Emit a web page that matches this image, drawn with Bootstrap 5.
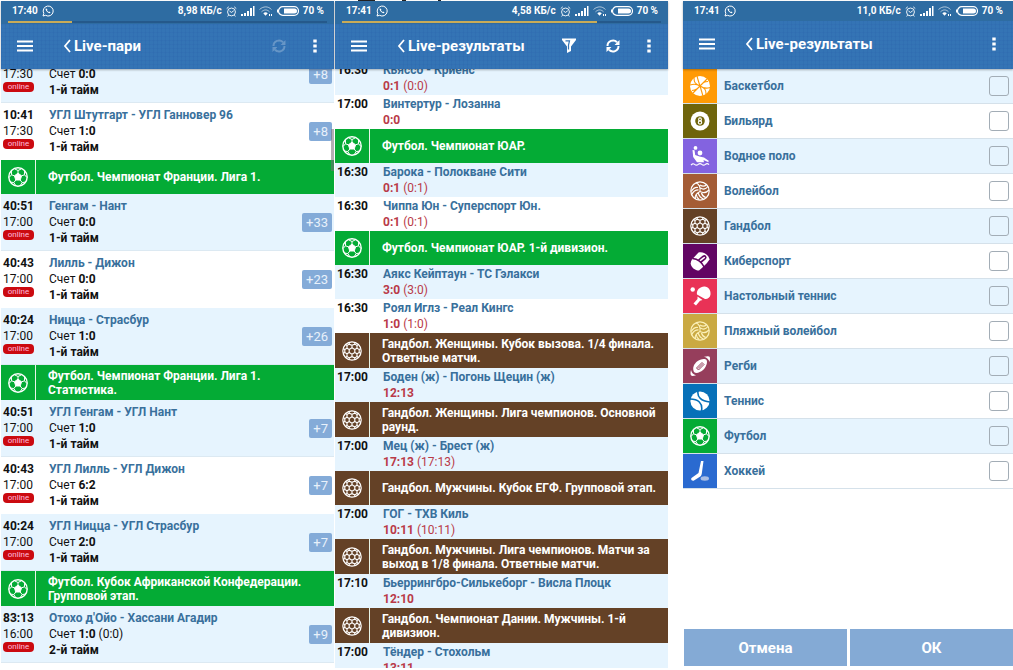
<!DOCTYPE html>
<html lang="ru">
<head>
<meta charset="utf-8">
<meta name="viewport" content="width=device-width, initial-scale=1">
<title>Live-пари</title>
<link href="https://cdn.jsdelivr.net/npm/bootstrap@5.3.0/dist/css/bootstrap.min.css" rel="stylesheet">
<style>
  :root { --row: #e6f4fe; --ink: #39709c; --bar: #3474b5; --soft: #84abd8; }
  body { font-family: Roboto, "Noto Sans", sans-serif; font-size: 12px; line-height: 16px; color: #111; background: #fff; }
  .screens { height: 100vh; padding: 0 0 2px 1px; }
  .page-scrap { height: 1px; padding-left: 356px; }
  .phone { flex: 333 1 0; min-width: 0; }
  .phone-last { flex-grow: 330; margin-left: 14px; }
  .app-head { height: 68px; color: #fff; background-color: var(--bar);
    background-image: repeating-linear-gradient(90deg, rgba(20,60,150,.08) 0 1px, transparent 1px 4px), repeating-linear-gradient(0deg, rgba(20,60,150,.06) 0 1px, transparent 1px 4px);
    box-shadow: 0 1px 2px rgba(0,0,0,.3); z-index: 1; }
  .status { height: 20px; padding: 0 10px 0 11px; font-size: 10px; font-weight: 700; background: #2e6ca2; }
  .load-track { height: 3px; padding: 0 7px 1px; background: #2e6ca2; }
  .load-track .progress { height: 2px; border-radius: 0; background: #25598b; }
  .load-track .progress-bar { background: #c9ab58; }
  .tools { padding: 0 5px 2px 16px; }
  .tools button { border: 0; padding: 0; background: none; color: inherit; line-height: 0; }
  .tools .tool { width: 44px; height: 32px; }
  .tools .more { width: 28px; height: 32px; }
  .tools .back { margin-left: 30px; }
  .title { font-size: 15px; line-height: 20px; font-weight: 700; margin: 0 0 0 3px; }
  .feed { min-height: 0; overflow: hidden; padding-bottom: 24px; }
  .league { min-height: 34px; color: #fff; font-weight: 700; line-height: 14px; }
  .league.two { min-height: 35px; }
  .league h2 { font: inherit; margin: 0; padding: 0 4px 0 12px; }
  .league .ico { flex: 0 0 35px; border-right: 1px solid #e8f5e8; }
  .green { background: #04ab35; }
  .brown { background: #644126; }
  .game { height: 57px; padding: 4px 2px 0 2px; }
  .game.even, .result.even, .sport:nth-child(odd) { background: var(--row); }
  .game.even { box-shadow: inset 0 -1px #dce9f2; }
  .when { width: 46px; }
  .name { color: var(--ink); font-weight: 700; }
  .live { width: 31px; height: 10px; border-radius: 4px; background: #cb0a10; color: #fbd; font-size: 8px; line-height: 10px; text-align: center; }
  .more-bets { height: 19px; padding: 0 4px; border: 0; border-radius: 2px; background: var(--soft); color: #e8f1fb; font-size: 13px; line-height: 19px; margin-top: -4px; }
  .result { height: 34px; padding: 1px 2px 0; }
  .score { color: #b93a48; }
  b { font-weight: 700; }
  .thumb { top: 60px; right: 0; width: 3px; height: 42px; background: rgba(120,110,120,.55); }
  .sport { height: 35px; border-bottom: 1px solid #d5e1ea; color: var(--ink); font-weight: 700; padding-right: 4px; }
  .sport .ico { width: 34px; height: 34px; }
  .sport .label-text { padding-left: 7px; }
  .sport .form-check-input { width: 20px; height: 20px; margin: 0; border: 1px solid #a3adb6; border-radius: 3px; background-color: transparent; }
  .actions { gap: 3px; padding: 0 0 2px 1px; }
  .actions button { height: 37px; border: 0; background: #84aad5; color: #fff; font-size: 15px; font-weight: 700; }
</style>
</head>
<body>
<svg class="d-none" aria-hidden="true">
  <symbol id="menu" viewBox="0 0 16 12"><path d="M0 1.500h16M0 6h16M0 10.500h16" stroke="currentColor" stroke-width="1.800"/></symbol>
  <symbol id="back" viewBox="0 0 8 14"><path d="M7 1 2 7l5 6" fill="none" stroke="currentColor" stroke-width="1.800"/></symbol>
  <symbol id="dots" viewBox="0 0 4 14"><path d="M.3.500h3.400v3H.3zM.3 5.500h3.400v3H.3zM.3 10.500h3.400v3H.3z" fill="currentColor"/></symbol>
  <symbol id="reload" viewBox="0 0 16 16"><path d="M2.500 8A5.500 5.500 0 0 1 12 4.200M13.500 8A5.500 5.500 0 0 1 4 11.800" fill="none" stroke="currentColor" stroke-width="2"/><path d="M14.500 2v5H9.500zM1.500 14V9h5z" fill="currentColor"/></symbol>
  <symbol id="filter" viewBox="0 0 14 15"><path d="M0 .500h14v1.500L9 8.500V13l-4 2V8.500L0 2z" fill="currentColor"/><path d="M3.500 2.800h4L6.500 7v4.500" fill="none" stroke="#3474b5" stroke-width="1.200"/></symbol>
  <symbol id="wa" viewBox="0 0 12 12"><path d="M1 11l.8-2.600A5 5 0 1 1 3.600 10.300z" fill="none" stroke="currentColor"/><path d="M4 3.300c-.8.900-.3 2.200 1 3.500s2.700 1.900 3.600 1l-1.300-1.200-.8.500L5 5.500l.4-.9z" fill="currentColor"/></symbol>
  <symbol id="alarm" viewBox="0 0 12 12"><circle cx="6" cy="6.500" r="4.300" fill="none" stroke="currentColor"/><path d="M.8 2.800 3 .9M11.200 2.800 9 .9M3.800 5.500 6 7l2.500-1.800M2.800 10l-1 1.400M9.200 10l1 1.400" fill="none" stroke="currentColor"/></symbol>
  <symbol id="signal" viewBox="0 0 14 12"><path d="M0 9h2v2H0zM3 8h2v3H3zM6 6h2v5H6zM9 3h2v8H9zM12 1h1.500v10H12z" fill="currentColor"/></symbol>
  <symbol id="wifi" viewBox="0 0 14 12"><path d="M.5 4.500c4-3.500 8.500-3.500 12 0M2.500 6.800c2.800-2.500 5.500-2.500 8 0" fill="none" stroke="currentColor" opacity=".6"/><path d="M4.300 8.300c1.500-1.300 3-1.300 4.500 0L6.500 10.700zM10 9h1v2h-1zM12 9h1v2h-1z" fill="currentColor"/></symbol>
  <symbol id="batt" viewBox="0 0 22 10"><rect x="1.500" y=".7" width="20" height="8.600" rx="4.300" fill="none" stroke="currentColor" stroke-width="1.200"/><path d="M7 2.500h10.500a2.500 2.500 0 0 1 0 5H7zM0 3.500h1v3H0z" fill="currentColor"/></symbol>

  <symbol id="football" viewBox="0 0 20 20"><g stroke="currentColor"><circle cx="10" cy="10" r="9.200" fill="none" stroke-width="1.400"/><path d="M10 6.200 13.600 8.800 12.200 13H7.800L6.400 8.800z" fill="currentColor"/><path d="M10 6.200V3.500M13.600 8.800l2.900-1M12.200 13l2 2.600M7.800 13l-2 2.600M6.400 8.800l-2.900-1M10 3.500 13.500 1.800M10 3.500 6.500 1.800M16.500 7.800l2.500 2.700M16.500 7.800 16.600 4M14.200 15.600l3.500-.6M14.200 15.600 12 18.900M5.800 15.600l-3.500-.6M5.800 15.600 8 18.900M3.500 7.800 1 10.500M3.500 7.800 3.400 4" fill="none"/></g></symbol>
  <symbol id="handball" viewBox="0 0 20 20"><g fill="none" stroke="currentColor" stroke-width="1.200"><circle cx="10" cy="10" r="9.200"/><path d="M10 6.800 12.800 8.500v3L10 13.200 7.200 11.500v-3zM10 6.800V4.300M12.800 8.500 15 7.200M12.800 11.500l2.200 1.300M10 13.200v2.500M7.200 11.500 5 12.800M7.200 8.500 5 7.200M10 4.300l2.800-1.200L15 4.500v2.700l2.200 1.300v3L15 12.800v2.700l-2.200 1.400-2.800-1.200-2.800 1.200L5 15.500v-2.700l-2.200-1.300v-3L5 7.200V4.500l2.200-1.400zM12.800 3.100V1.200M7.200 3.100V1.200M17.200 8.500l1.700-.9M17.200 11.500l1.700.9M2.800 8.500l-1.700-.9M2.800 11.500l-1.700.9M12.800 16.900v1.900M7.200 16.900v1.900M15 4.500l1.500-.9M5 4.500l-1.500-.9M15 15.500l1.500.9M5 15.500l-1.500.9"/></g></symbol>
  <symbol id="basket" viewBox="0 0 20 20"><circle cx="10" cy="10" r="10" fill="currentColor"/><path d="M4 2c0 4 1 6 6 8s6 4 6 8M2 14.500c4-.5 6-1.500 8-4.500s4-4.500 8-4.500M3 17 17 3M7 0c1 4 2 7 3 10s2 7 3 10M0 9c4-1.500 7-1 10 1s7 2.500 10 1.500" fill="none" stroke="#ff9a05" stroke-width="1.100"/></symbol>
  <symbol id="billiard" viewBox="0 0 20 20"><circle cx="10" cy="10" r="9.500" fill="currentColor"/><circle cx="10" cy="10" r="4.800" fill="#6f640b"/><g fill="none" stroke="currentColor" stroke-width="1.100"><ellipse cx="10" cy="8.400" rx="1.400" ry="1.500"/><ellipse cx="10" cy="11.500" rx="1.700" ry="1.600"/></g></symbol>
  <symbol id="polo" viewBox="0 0 20 20"><circle cx="5.500" cy="1.900" r="1.900" fill="currentColor"/><circle cx="10" cy="7" r="2.400" fill="currentColor"/><path d="M2.500 4 4.500 4.200 5.200 9l4.300 1.500 4.500 1L19 15l-1 1-4.500-2 .5 2.200H7L3.200 11z" fill="currentColor"/><path d="M1 19.200q1.800-2.400 3.600-.8t3.600 0 3.600 0 3.600 0 3.600.3" fill="none" stroke="currentColor" stroke-width="1.200"/></symbol>
  <symbol id="volley" viewBox="0 0 20 20"><g fill="none" stroke="currentColor" stroke-width="1.200"><circle cx="10" cy="10" r="9.200"/><path d="M10 10.500C10.500 6.500 9 3 6 1.700M10 10.500C6 12.500 4.500 15 5.500 18M10 10.500c3.500 1.800 6.500 1.200 9-1.500M8 6.500C5.500 6 3 7.500 1.200 10.500M8.500 8.800C5.500 8.800 3 10.800 1.800 13.500M10.500 7C13 8.800 16 8.200 17.800 5.500M10 4c2.500 1.800 4.800 1.500 6.500-.5M8.200 12c.8 3 2.800 5 5.300 6M11.500 12c.6 2.300 2 3.800 4.300 4.500M6.300 13.800c.2 2 1.200 3.700 3 5"/></g></symbol>
  <symbol id="cyber" viewBox="0 0 22 20"><path d="M3 8.500 9.500 1.500C14 0 20 4 20.500 8.500L18 12l-4 4-4 3.500C5 19.500-1 14 3 8.500z" fill="currentColor"/><path d="M3.500 7.500C9 8 13 11.500 15.500 16.500M9 9.500l5-4c2-1.500 4 .5 2 2.500l-4 3" fill="none" stroke="#620563" stroke-width="1.600"/></symbol>
  <symbol id="pingpong" viewBox="0 0 20 20"><circle cx="2.200" cy="3.500" r="2.200" fill="currentColor"/><path d="M6.500 8.500C5.500 4 10 .3 14 .5c4 .3 6.500 4 6 8-.4 3.200-3 4.800-5.500 4.500z" fill="currentColor"/><path d="M7 10.500 12 14l-2.500.8L5.500 19.500 3 17.500 7 13z" fill="currentColor"/></symbol>
  <symbol id="rugby" viewBox="0 0 20 20"><path d="M4 16C2 12 4 8 7 5.500S15 2 16.500 4 16 11.500 13 14 6 18 4 16z" fill="currentColor"/><path d="M14 .8q4-1 5.300-.2T19.500 6q-1-4-5.500-5.200zM1 14q-1 4 0 5.300t5-.1q-4-1-5-5.200z" fill="currentColor"/><path d="M6.500 12 12 6.500l2 2L8.500 14zM8 12.500l4.500-4.500" fill="none" stroke="#963e5c" stroke-width="1"/></symbol>
  <symbol id="tennis" viewBox="0 0 20 20"><circle cx="10" cy="10" r="9.600" fill="currentColor"/><path d="M8 0c-1 6 3 10 12 11M0 8c8 0 13 4 11.500 12" fill="none" stroke="#0770b8" stroke-width="1.600"/></symbol>
  <symbol id="hockey" viewBox="0 0 20 20"><path d="M11 0h2.500l-1.700 12.500c-.3 2-1 2.700-2.300 3.500L4 19.500c-2 .8-3.500-1-2.500-2.500l7-5z" fill="currentColor"/><ellipse cx="14.800" cy="17.500" rx="4.200" ry="2.200" fill="#a8bde4"/></symbol>
</svg>

<main class="screens d-flex flex-column">
  <div class="page-scrap d-flex" aria-hidden="true"><svg width="90" height="1"><path d="M1 .5h17M45 .5h4M81 .5h3" stroke="#222"/></svg></div>
  <div class="d-flex flex-grow-1" style="min-height:0;gap:1px">

  <section class="phone d-flex flex-column position-relative">
    <header class="app-head d-flex flex-column flex-shrink-0 position-relative">
      <div class="status d-flex align-items-center">
        <span>17:40</span><svg class="ms-1" width="12" height="12"><use href="#wa"/></svg>
        <span class="ms-auto">8,98 КБ/с</span><svg class="ms-1" width="11" height="11"><use href="#alarm"/></svg><svg class="ms-1" width="14" height="12"><use href="#signal"/></svg><svg class="ms-1" width="14" height="12"><use href="#wifi"/></svg><svg class="ms-1 me-1" width="22" height="10"><use href="#batt"/></svg><span>70 %</span>
      </div>
      <div class="load-track"><div class="progress"><div class="progress-bar" style="width:20%"></div></div></div>
      <div class="tools d-flex align-items-center flex-grow-1">
        <button type="button" aria-label="Меню"><svg width="16" height="12"><use href="#menu"/></svg></button>
        <button type="button" class="back" aria-label="Назад"><svg width="8" height="14"><use href="#back"/></svg></button>
        <h1 class="title">Live-пари</h1>
        <button type="button" class="tool ms-auto opacity-25" aria-label="Обновить"><svg width="16" height="16"><use href="#reload"/></svg></button>
        <button type="button" class="more" aria-label="Ещё"><svg width="4" height="14"><use href="#dots"/></svg></button>
      </div>
    </header>
    <div class="position-relative flex-grow-1 d-flex flex-column" style="min-height:0">
    <div class="feed flex-grow-1" data-scroll="23">
      <article class="game even d-flex"><div class="when"><b>&nbsp;</b><div>17:30</div><div class="live">online</div></div><div><div class="name">&nbsp;</div><div>Счет <b>0:0</b></div><b>1-й тайм</b></div><button class="more-bets ms-auto align-self-center" type="button">+8</button></article>
      <article class="game d-flex"><div class="when"><b>10:41</b><div>17:30</div><div class="live">online</div></div><div><div class="name">УГЛ Штутгарт - УГЛ Ганновер 96</div><div>Счет <b>1:0</b></div><b>1-й тайм</b></div><button class="more-bets ms-auto align-self-center" type="button">+8</button></article>
      <header class="league green d-flex"><div class="ico d-flex align-items-center justify-content-center"><svg width="20" height="20"><use href="#football"/></svg></div><h2 class="align-self-center">Футбол. Чемпионат Франции. Лига 1.</h2></header>
      <article class="game even d-flex"><div class="when"><b>40:51</b><div>17:00</div><div class="live">online</div></div><div><div class="name">Генгам - Нант</div><div>Счет <b>0:0</b></div><b>1-й тайм</b></div><button class="more-bets ms-auto align-self-center" type="button">+33</button></article>
      <article class="game d-flex"><div class="when"><b>40:43</b><div>17:00</div><div class="live">online</div></div><div><div class="name">Лилль - Дижон</div><div>Счет <b>0:0</b></div><b>1-й тайм</b></div><button class="more-bets ms-auto align-self-center" type="button">+23</button></article>
      <article class="game even d-flex"><div class="when"><b>40:24</b><div>17:00</div><div class="live">online</div></div><div><div class="name">Ницца - Страсбур</div><div>Счет <b>1:0</b></div><b>1-й тайм</b></div><button class="more-bets ms-auto align-self-center" type="button">+26</button></article>
      <header class="league two green d-flex"><div class="ico d-flex align-items-center justify-content-center"><svg width="20" height="20"><use href="#football"/></svg></div><h2 class="align-self-center">Футбол. Чемпионат Франции. Лига 1.<br>Статистика.</h2></header>
      <article class="game even d-flex"><div class="when"><b>40:51</b><div>17:00</div><div class="live">online</div></div><div><div class="name">УГЛ Генгам - УГЛ Нант</div><div>Счет <b>1:0</b></div><b>1-й тайм</b></div><button class="more-bets ms-auto align-self-center" type="button">+7</button></article>
      <article class="game d-flex"><div class="when"><b>40:43</b><div>17:00</div><div class="live">online</div></div><div><div class="name">УГЛ Лилль - УГЛ Дижон</div><div>Счет <b>6:2</b></div><b>1-й тайм</b></div><button class="more-bets ms-auto align-self-center" type="button">+7</button></article>
      <article class="game even d-flex"><div class="when"><b>40:24</b><div>17:00</div><div class="live">online</div></div><div><div class="name">УГЛ Ницца - УГЛ Страсбур</div><div>Счет <b>2:0</b></div><b>1-й тайм</b></div><button class="more-bets ms-auto align-self-center" type="button">+7</button></article>
      <header class="league two green d-flex"><div class="ico d-flex align-items-center justify-content-center"><svg width="20" height="20"><use href="#football"/></svg></div><h2 class="align-self-center">Футбол. Кубок Африканской Конфедерации.<br>Групповой этап.</h2></header>
      <article class="game even d-flex"><div class="when"><b>83:13</b><div>16:00</div><div class="live">online</div></div><div><div class="name">Отохо д'Ойо - Хассани Агадир</div><div>Счет <b>1:0</b> (0:0)</div><b>2-й тайм</b></div><button class="more-bets ms-auto align-self-center" type="button">+9</button></article>
    </div>
    <div class="thumb position-absolute"></div>
    </div>
  </section>

  <section class="phone d-flex flex-column">
    <header class="app-head d-flex flex-column flex-shrink-0 position-relative">
      <div class="status d-flex align-items-center">
        <span>17:41</span><svg class="ms-1" width="12" height="12"><use href="#wa"/></svg>
        <span class="ms-auto">4,58 КБ/с</span><svg class="ms-1" width="11" height="11"><use href="#alarm"/></svg><svg class="ms-1" width="14" height="12"><use href="#signal"/></svg><svg class="ms-1" width="14" height="12"><use href="#wifi"/></svg><svg class="ms-1 me-1" width="22" height="10"><use href="#batt"/></svg><span>70 %</span>
      </div>
      <div class="load-track"><div class="progress"><div class="progress-bar" style="width:80%"></div></div></div>
      <div class="tools d-flex align-items-center flex-grow-1">
        <button type="button" aria-label="Меню"><svg width="16" height="12"><use href="#menu"/></svg></button>
        <button type="button" class="back" aria-label="Назад"><svg width="8" height="14"><use href="#back"/></svg></button>
        <h1 class="title">Live-результаты</h1>
        <button type="button" class="tool ms-auto" aria-label="Фильтр"><svg width="14" height="15"><use href="#filter"/></svg></button>
        <button type="button" class="tool" aria-label="Обновить"><svg width="16" height="16"><use href="#reload"/></svg></button>
        <button type="button" class="more" aria-label="Ещё"><svg width="4" height="14"><use href="#dots"/></svg></button>
      </div>
    </header>
    <div class="feed flex-grow-1" data-scroll="8">
      <article class="result even d-flex"><b class="when">16:30</b><div><div class="name">Кьяссо - Криенс</div><div class="score"><b>0:1</b> (0:0)</div></div></article>
      <article class="result d-flex"><b class="when">17:00</b><div><div class="name">Винтертур - Лозанна</div><div class="score"><b>0:0</b></div></div></article>
      <header class="league green d-flex"><div class="ico d-flex align-items-center justify-content-center"><svg width="20" height="20"><use href="#football"/></svg></div><h2 class="align-self-center">Футбол. Чемпионат ЮАР.</h2></header>
      <article class="result even d-flex"><b class="when">16:30</b><div><div class="name">Барока - Полокване Сити</div><div class="score"><b>0:1</b> (0:1)</div></div></article>
      <article class="result d-flex"><b class="when">16:30</b><div><div class="name">Чиппа Юн - Суперспорт Юн.</div><div class="score"><b>0:1</b> (0:1)</div></div></article>
      <header class="league green d-flex"><div class="ico d-flex align-items-center justify-content-center"><svg width="20" height="20"><use href="#football"/></svg></div><h2 class="align-self-center">Футбол. Чемпионат ЮАР. 1-й дивизион.</h2></header>
      <article class="result even d-flex"><b class="when">16:30</b><div><div class="name">Аякс Кейптаун - ТС Гэлакси</div><div class="score"><b>3:0</b> (3:0)</div></div></article>
      <article class="result d-flex"><b class="when">16:30</b><div><div class="name">Роял Иглз - Реал Кингс</div><div class="score"><b>1:0</b> (1:0)</div></div></article>
      <header class="league two brown d-flex"><div class="ico d-flex align-items-center justify-content-center"><svg width="20" height="20"><use href="#handball"/></svg></div><h2 class="align-self-center">Гандбол. Женщины. Кубок вызова. 1/4 финала. Ответные матчи.</h2></header>
      <article class="result even d-flex"><b class="when">17:00</b><div><div class="name">Боден (ж) - Погонь Щецин (ж)</div><div class="score"><b>12:13</b></div></div></article>
      <header class="league two brown d-flex"><div class="ico d-flex align-items-center justify-content-center"><svg width="20" height="20"><use href="#handball"/></svg></div><h2 class="align-self-center">Гандбол. Женщины. Лига чемпионов. Основной раунд.</h2></header>
      <article class="result even d-flex"><b class="when">17:00</b><div><div class="name">Мец (ж) - Брест (ж)</div><div class="score"><b>17:13</b> (17:13)</div></div></article>
      <header class="league brown d-flex"><div class="ico d-flex align-items-center justify-content-center"><svg width="20" height="20"><use href="#handball"/></svg></div><h2 class="align-self-center">Гандбол. Мужчины. Кубок ЕГФ. Групповой этап.</h2></header>
      <article class="result even d-flex"><b class="when">17:00</b><div><div class="name">ГОГ - ТХВ Киль</div><div class="score"><b>10:11</b> (10:11)</div></div></article>
      <header class="league two brown d-flex"><div class="ico d-flex align-items-center justify-content-center"><svg width="20" height="20"><use href="#handball"/></svg></div><h2 class="align-self-center">Гандбол. Мужчины. Лига чемпионов. Матчи за выход в 1/8 финала. Ответные матчи.</h2></header>
      <article class="result even d-flex"><b class="when">17:10</b><div><div class="name">Бьеррингбро-Силькеборг - Висла Плоцк</div><div class="score"><b>12:10</b></div></div></article>
      <header class="league two brown d-flex"><div class="ico d-flex align-items-center justify-content-center"><svg width="20" height="20"><use href="#handball"/></svg></div><h2 class="align-self-center">Гандбол. Чемпионат Дании. Мужчины. 1-й<br>дивизион.</h2></header>
      <article class="result even d-flex"><b class="when">17:00</b><div><div class="name">Тёндер - Стохольм</div><div class="score"><b>13:11</b></div></div></article>
    </div>
  </section>

  <section class="phone phone-last d-flex flex-column">
    <header class="app-head d-flex flex-column flex-shrink-0 position-relative">
      <div class="status d-flex align-items-center">
        <span>17:41</span><svg class="ms-1" width="12" height="12"><use href="#wa"/></svg>
        <span class="ms-auto">11,0 КБ/с</span><svg class="ms-1" width="11" height="11"><use href="#alarm"/></svg><svg class="ms-1" width="14" height="12"><use href="#signal"/></svg><svg class="ms-1" width="14" height="12"><use href="#wifi"/></svg><svg class="ms-1 me-1" width="22" height="10"><use href="#batt"/></svg><span>70 %</span>
      </div>
      <div class="tools d-flex align-items-center flex-grow-1">
        <button type="button" aria-label="Меню"><svg width="16" height="12"><use href="#menu"/></svg></button>
        <button type="button" class="back" aria-label="Назад"><svg width="8" height="14"><use href="#back"/></svg></button>
        <h1 class="title">Live-результаты</h1>
        <button type="button" class="more ms-auto" aria-label="Ещё"><svg width="4" height="14"><use href="#dots"/></svg></button>
      </div>
    </header>
    <form class="d-flex flex-column flex-grow-1">
      <div>
        <label class="sport d-flex align-items-center"><span class="ico d-flex align-items-center justify-content-center text-white" style="background:#ff9a05"><svg width="20" height="20"><use href="#basket"/></svg></span><span class="label-text">Баскетбол</span><input class="form-check-input ms-auto" type="checkbox"></label>
        <label class="sport d-flex align-items-center"><span class="ico d-flex align-items-center justify-content-center text-white" style="background:#6f640b"><svg width="20" height="20"><use href="#billiard"/></svg></span><span class="label-text">Бильярд</span><input class="form-check-input ms-auto" type="checkbox"></label>
        <label class="sport d-flex align-items-center"><span class="ico d-flex align-items-center justify-content-center text-white" style="background:#8363e0"><svg width="20" height="20"><use href="#polo"/></svg></span><span class="label-text">Водное поло</span><input class="form-check-input ms-auto" type="checkbox"></label>
        <label class="sport d-flex align-items-center"><span class="ico d-flex align-items-center justify-content-center text-white" style="background:#a45c35"><svg width="20" height="20"><use href="#volley"/></svg></span><span class="label-text">Волейбол</span><input class="form-check-input ms-auto" type="checkbox"></label>
        <label class="sport d-flex align-items-center"><span class="ico d-flex align-items-center justify-content-center text-white" style="background:#644126"><svg width="20" height="20"><use href="#handball"/></svg></span><span class="label-text">Гандбол</span><input class="form-check-input ms-auto" type="checkbox"></label>
        <label class="sport d-flex align-items-center"><span class="ico d-flex align-items-center justify-content-center text-white" style="background:#620563"><svg width="22" height="20"><use href="#cyber"/></svg></span><span class="label-text">Киберспорт</span><input class="form-check-input ms-auto" type="checkbox"></label>
        <label class="sport d-flex align-items-center"><span class="ico d-flex align-items-center justify-content-center text-white" style="background:#e93256"><svg width="21" height="20"><use href="#pingpong"/></svg></span><span class="label-text">Настольный теннис</span><input class="form-check-input ms-auto" type="checkbox"></label>
        <label class="sport d-flex align-items-center"><span class="ico d-flex align-items-center justify-content-center" style="background:#caa942;color:#fbf0b8"><svg width="20" height="20"><use href="#volley"/></svg></span><span class="label-text">Пляжный волейбол</span><input class="form-check-input ms-auto" type="checkbox"></label>
        <label class="sport d-flex align-items-center"><span class="ico d-flex align-items-center justify-content-center text-white" style="background:#963e5c"><svg width="20" height="20"><use href="#rugby"/></svg></span><span class="label-text">Регби</span><input class="form-check-input ms-auto" type="checkbox"></label>
        <label class="sport d-flex align-items-center"><span class="ico d-flex align-items-center justify-content-center text-white" style="background:#0770b8"><svg width="20" height="20"><use href="#tennis"/></svg></span><span class="label-text">Теннис</span><input class="form-check-input ms-auto" type="checkbox"></label>
        <label class="sport d-flex align-items-center"><span class="ico d-flex align-items-center justify-content-center text-white" style="background:#04ab35"><svg width="20" height="20"><use href="#football"/></svg></span><span class="label-text">Футбол</span><input class="form-check-input ms-auto" type="checkbox"></label>
        <label class="sport d-flex align-items-center"><span class="ico d-flex align-items-center justify-content-center text-white" style="background:#2a6ad0"><svg width="20" height="20"><use href="#hockey"/></svg></span><span class="label-text">Хоккей</span><input class="form-check-input ms-auto" type="checkbox"></label>
      </div>
      <div class="actions d-flex mt-auto">
        <button type="button" class="flex-fill w-50">Отмена</button>
        <button type="button" class="flex-fill w-50">ОК</button>
      </div>
    </form>
  </section>
  </div>
</main>
<script src="https://cdn.jsdelivr.net/npm/bootstrap@5.3.0/dist/js/bootstrap.bundle.min.js"></script>
<script>
  document.querySelectorAll('[data-scroll]').forEach(function (feed) {
    feed.scrollTop = Number(feed.dataset.scroll);
  });
</script>
</body>
</html>
